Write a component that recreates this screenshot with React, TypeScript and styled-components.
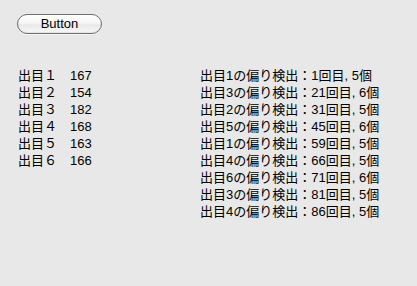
import styled, { createGlobalStyle } from "styled-components"

const counts = [
    { face: "１", total: 167 },
    { face: "２", total: 154 },
    { face: "３", total: 182 },
    { face: "４", total: 168 },
    { face: "５", total: 163 },
    { face: "６", total: 166 },
]

const detections = [
    { face: 1, round: 1, run: 5 },
    { face: 3, round: 21, run: 6 },
    { face: 2, round: 31, run: 5 },
    { face: 5, round: 45, run: 6 },
    { face: 1, round: 59, run: 5 },
    { face: 4, round: 66, run: 5 },
    { face: 6, round: 71, run: 6 },
    { face: 3, round: 81, run: 5 },
    { face: 4, round: 86, run: 5 },
]

const GlobalStyle = createGlobalStyle`
    html, body {
        margin: 0;
        padding: 0;
        background: #e8e8e8;
    }
    body {
        width: 417px;
        height: 286px;
        overflow: hidden;
        font-family: "Liberation Sans", "Noto Sans CJK JP", sans-serif;
        font-size: 13px;
        color: #000;
    }
`

const Window = styled.div`
    display: flex;
    flex-direction: column;
    padding: 14px 0 0 17px;
`

const Toolbar = styled.div`
    display: flex;
`

const PillButton = styled.button`
    width: 85px;
    height: 20px;
    padding: 0;
    border: 1px solid #6f6f6f;
    border-radius: 10px;
    background: linear-gradient(#ffffff 0%, #f6f6f6 45%, #e9e9e9 55%, #f8f8f8 100%);
    box-shadow: inset 0 -1px 1px rgba(0, 0, 0, 0.08), 0 1px 0 rgba(255, 255, 255, 0.6);
    font-family: "Liberation Sans", sans-serif;
    font-size: 13px;
    line-height: 18px;
    color: #000;
`

const Columns = styled.div`
    display: flex;
    margin-top: 33px;
`

const CountList = styled.div`
    display: flex;
    flex-direction: column;
    width: 182px;
    padding-left: 1px;
`

const DetectList = styled.div`
    display: flex;
    flex-direction: column;
`

const Line = styled.div`
    height: 17px;
    line-height: 17px;
    white-space: pre;
`

export default function App() {
    return (
        <>
            <GlobalStyle />
            <Window>
                <Toolbar>
                    <PillButton>Button</PillButton>
                </Toolbar>
                <Columns>
                    <CountList>
                        {counts.map(c => (
                            <Line key={c.face}>{`出目${c.face}　${c.total}`}</Line>
                        ))}
                    </CountList>
                    <DetectList>
                        {detections.map(d => (
                            <Line key={d.round}>{`出目${d.face}の偏り検出：${d.round}回目, ${d.run}個`}</Line>
                        ))}
                    </DetectList>
                </Columns>
            </Window>
        </>
    )
}
